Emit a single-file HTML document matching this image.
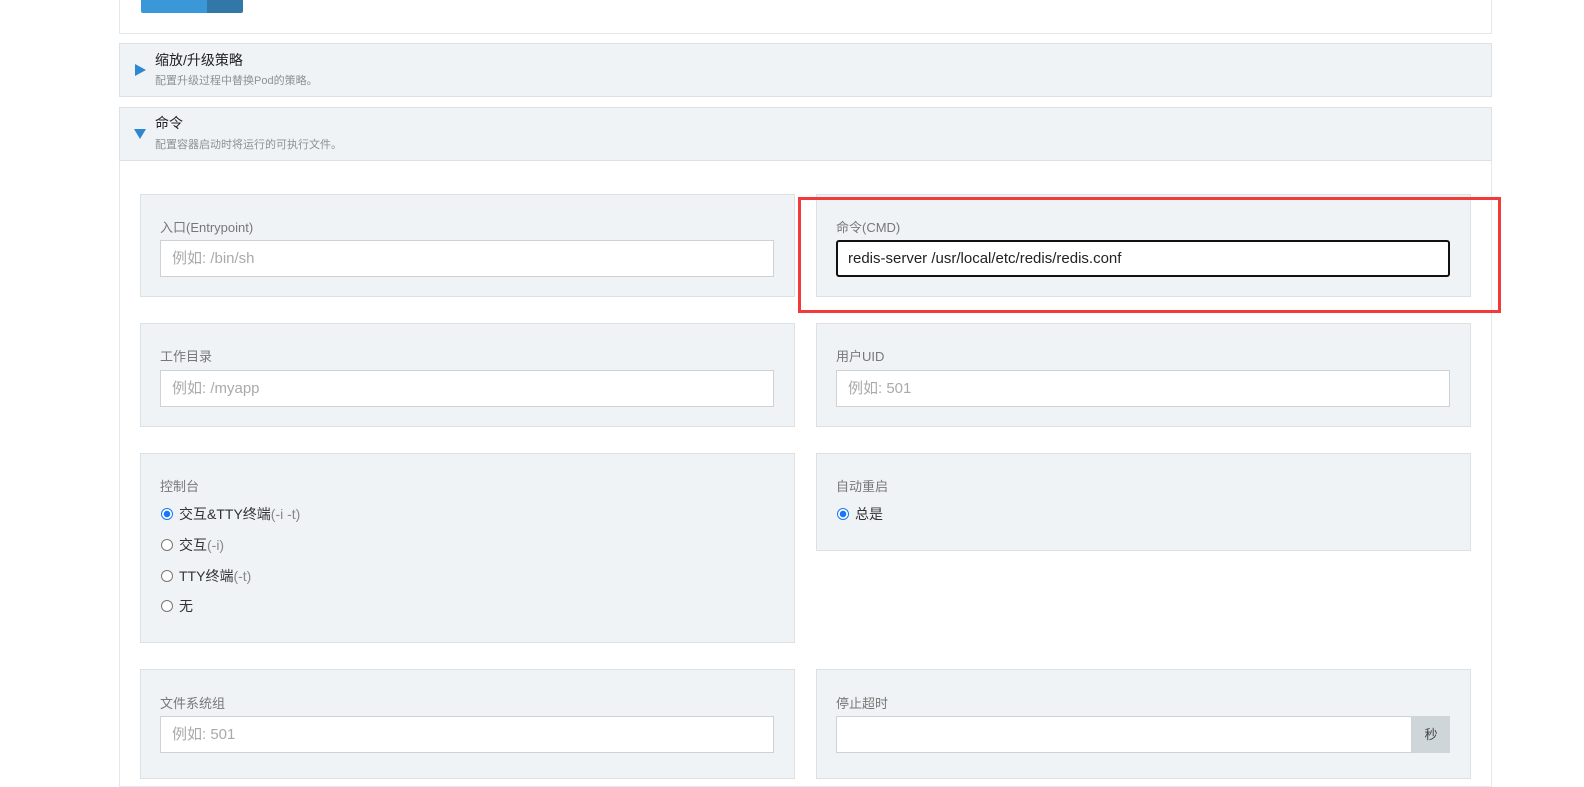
<!DOCTYPE html>
<html><head><meta charset="utf-8"><style>
*{box-sizing:border-box;margin:0;padding:0}
body{width:1584px;height:768px;overflow:hidden;background:#fff;font-family:"Liberation Sans","Noto Sans CJK SC",sans-serif;position:relative;color:#333}
.a{position:absolute}
.hdr{background:#f0f3f5;border:1px solid #dbe1e4}
.t1{font-size:14px;color:#222}
.t2{font-size:11px;color:#8a9296}
.box{background:#f0f3f5;border:1px solid #dbe1e4}
.lbl{font-size:13px;color:#777}
.inp{background:#fff;border:1px solid #ccd3d8;height:37px;font-size:15px;color:#aaa;padding:8px 11px;line-height:19px}
.r{font-size:14px;color:#333;height:20px;line-height:20px}
.r i{display:inline-block;width:12px;height:12px;border:1px solid #777;border-radius:50%;vertical-align:-1px;margin-right:6px;background:#fff}
.r i.on{border:1.5px solid #1976f5;background:radial-gradient(circle,#1976f5 3px,#fff 3.5px)}
.g{color:#888}
</style></head><body>
<div class="a" style="left:119px;top:0;width:1373px;height:34px;border:1px solid #e6e9eb;border-top:none"></div>
<div class="a" style="left:141px;top:0;width:66px;height:13px;background:#3a98d8;border-radius:0 0 0 2px"></div>
<div class="a" style="left:207px;top:0;width:36px;height:13px;background:#3177a8;border-radius:0 0 2px 0"></div>

<div class="a hdr" style="left:119px;top:43px;width:1373px;height:54px"></div>
<svg class="a" style="left:135px;top:64px" width="11" height="12"><polygon points="0,0 11,6 0,12" fill="#2f87cf"/></svg>
<div class="a t1" style="left:155px;top:50px">缩放/升级策略</div>
<div class="a t2" style="left:155px;top:72px">配置升级过程中替换Pod的策略。</div>

<div class="a" style="left:119px;top:107px;width:1373px;height:680px;border:1px solid #e6e9eb"></div>
<div class="a hdr" style="left:119px;top:107px;width:1373px;height:54px"></div>
<svg class="a" style="left:134px;top:129px" width="12" height="10"><polygon points="0,0 12,0 6,10" fill="#2f87cf"/></svg>
<div class="a t1" style="left:155px;top:113px">命令</div>
<div class="a t2" style="left:155px;top:136px">配置容器启动时将运行的可执行文件。</div>

<div class="a box" style="left:140px;top:194px;width:655px;height:103px"></div>
<div class="a lbl" style="left:160px;top:217px">入口(Entrypoint)</div>
<div class="a inp" style="left:160px;top:240px;width:614px">例如: /bin/sh</div>

<div class="a box" style="left:816px;top:194px;width:655px;height:103px"></div>
<div class="a lbl" style="left:836px;top:217px">命令(CMD)</div>
<div class="a inp" style="left:836px;top:240px;width:614px;border:2px solid #111;border-radius:3px;color:#222;padding:7px 10px">redis-server /usr/local/etc/redis/redis.conf</div>
<div class="a" style="left:798px;top:197px;width:703px;height:116px;border:3px solid #f23a3a"></div>

<div class="a box" style="left:140px;top:323px;width:655px;height:104px"></div>
<div class="a lbl" style="left:160px;top:346px">工作目录</div>
<div class="a inp" style="left:160px;top:370px;width:614px">例如: /myapp</div>
<div class="a box" style="left:816px;top:323px;width:655px;height:104px"></div>
<div class="a lbl" style="left:836px;top:346px">用户UID</div>
<div class="a inp" style="left:836px;top:370px;width:614px">例如: 501</div>

<div class="a box" style="left:140px;top:453px;width:655px;height:190px"></div>
<div class="a lbl" style="left:160px;top:476px">控制台</div>
<div class="a r" style="left:161px;top:504px"><i class="on"></i>交互&amp;TTY终端<span class="g">(-i -t)</span></div>
<div class="a r" style="left:161px;top:535px"><i></i>交互<span class="g">(-i)</span></div>
<div class="a r" style="left:161px;top:566px"><i></i>TTY终端<span class="g">(-t)</span></div>
<div class="a r" style="left:161px;top:596px"><i></i>无</div>

<div class="a box" style="left:816px;top:453px;width:655px;height:98px"></div>
<div class="a lbl" style="left:836px;top:476px">自动重启</div>
<div class="a r" style="left:837px;top:504px"><i class="on"></i>总是</div>

<div class="a box" style="left:140px;top:669px;width:655px;height:110px"></div>
<div class="a lbl" style="left:160px;top:693px">文件系统组</div>
<div class="a inp" style="left:160px;top:716px;width:614px">例如: 501</div>
<div class="a box" style="left:816px;top:669px;width:655px;height:110px"></div>
<div class="a lbl" style="left:836px;top:693px">停止超时</div>
<div class="a inp" style="left:836px;top:716px;width:576px"></div>
<div class="a" style="left:1412px;top:716px;width:38px;height:37px;background:#cfd6da;font-size:13px;color:#444;text-align:center;line-height:37px">秒</div>
</body></html>
